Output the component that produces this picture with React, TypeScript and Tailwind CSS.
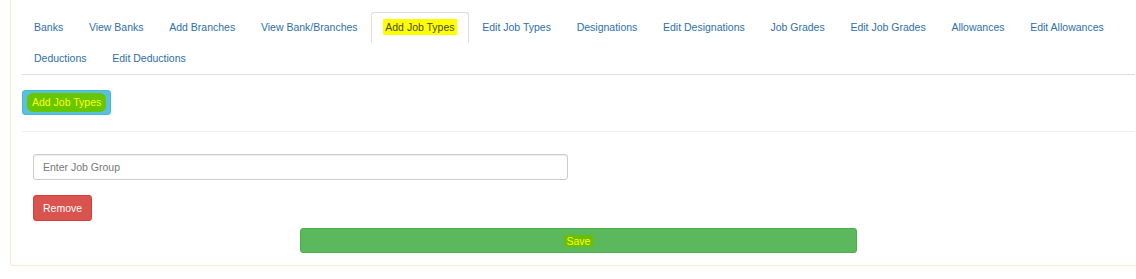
import React from 'react';

const tabs = [
  'Banks',
  'View Banks',
  'Add Branches',
  'View Bank/Branches',
  'Add Job Types',
  'Edit Job Types',
  'Designations',
  'Edit Designations',
  'Job Grades',
  'Edit Job Grades',
  'Allowances',
  'Edit Allowances',
  'Deductions',
  'Edit Deductions',
];

const active = 'Add Job Types';

export default function App() {
  return (
    <div
      className="w-[1136px] h-[279px] overflow-hidden bg-white text-[10.5px]"
      style={{ fontFamily: '"Liberation Sans", Arial, sans-serif' }}
    >
      <div className="ml-[10px] w-[1137px] border-x border-b border-[#faebcc] rounded-b-[3px] px-[11px] pt-[12px] pb-[12px]">
        {/* Tabs */}
        <ul className="flex flex-wrap border-b border-[#ddd]">
          {tabs.map(t => (
            <li key={t} className="mr-[1.7px]">
              <a
                className={`block px-[11px] py-[7px] leading-[15px] border rounded-t-[3px] ${
                  t === active
                    ? 'border-[#ddd] border-b-transparent text-[#4a4a2a] bg-white'
                    : 'border-transparent text-[#2f6fa8]'
                }`}
              >
                {t === active ? <span className="bg-[#ffff00] px-[2px] py-[2px]">{t}</span> : t}
              </a>
            </li>
          ))}
        </ul>

        <div className="pt-[15px] pb-[16px] border-b border-[#eee]">
          <button className="h-[25px] px-[4px] border border-[#46b8da] bg-[#5bc0de] rounded-[3px] flex items-center">
            <span className="bg-[#66c600] text-[#ffff00] rounded-[6px] px-[5px] leading-[19px]">Add Job Types</span>
          </button>
        </div>

        <div className="pt-[22px]">
          <div className="w-1/2 px-[11px]">
            <input
              placeholder="Enter Job Group"
              className="w-full h-[26px] px-[9px] border border-[#ccc] rounded-[3px] shadow-[inset_0_1px_1px_rgba(0,0,0,0.075)] text-[#555] placeholder:text-[#777] outline-none"
            />
            <button className="mt-[15px] h-[26px] px-[9px] border border-[#d43f3a] bg-[#d9534f] rounded-[3px] text-white leading-[15px]">
              Remove
            </button>
          </div>
          <div className="mt-[7px] flex justify-center">
            <button className="w-[557px] h-[25px] border border-[#4cae4c] bg-[#5cb85c] rounded-[3px] flex items-center justify-center">
              <span className="bg-[#6abf00] text-[#ffff00] px-[3px] leading-[12px]">Save</span>
            </button>
          </div>
        </div>
      </div>
    </div>
  );
}
